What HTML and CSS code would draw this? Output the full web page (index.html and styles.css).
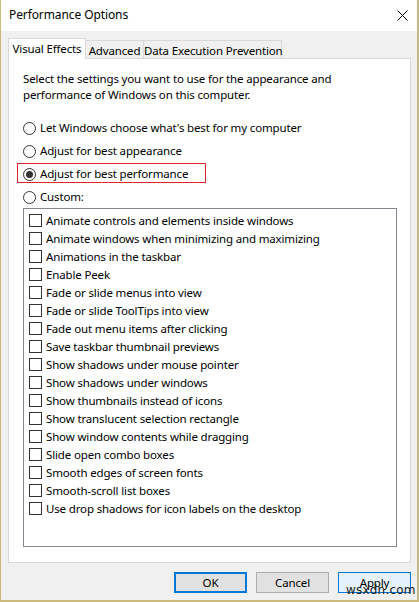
FILE: index.html
```html
<!DOCTYPE html>
<html lang="en">
<head>
<meta charset="utf-8">
<title>Performance Options</title>
<link rel="stylesheet" href="styles.css">
</head>
<body>
<div class="window">
  <div class="titlebar">
    <span class="title">Performance Options</span>
    <svg class="close" width="11" height="11" viewBox="0 0 11 11"><path d="M0.5 0.5 L10.5 10.5 M10.5 0.5 L0.5 10.5" stroke="#000" stroke-width="1"/></svg>
  </div>
  <div class="content">
    <div class="tabs">
      <div class="tab tab-active tab-ve">Visual Effects</div>
      <div class="tab tab-adv">Advanced</div>
      <div class="tab tab-dep">Data Execution Prevention</div>
    </div>
    <div class="panel">
      <p class="desc">Select the settings you want to use for the appearance and performance of Windows on this computer.</p>
      <div class="radios">
        <div class="radio-row"><span class="radio"></span><span>Let Windows choose what's best for my computer</span></div>
        <div class="radio-row"><span class="radio"></span><span>Adjust for best appearance</span></div>
        <div class="radio-row highlighted"><span class="radio checked"></span><span>Adjust for best performance</span><span class="redbox"></span></div>
        <div class="radio-row"><span class="radio"></span><span>Custom:</span></div>
      </div>
      <div class="listbox">
        <div class="check-row"><span class="check"></span><span>Animate controls and elements inside windows</span></div>
        <div class="check-row"><span class="check"></span><span>Animate windows when minimizing and maximizing</span></div>
        <div class="check-row"><span class="check"></span><span>Animations in the taskbar</span></div>
        <div class="check-row"><span class="check"></span><span>Enable Peek</span></div>
        <div class="check-row"><span class="check"></span><span>Fade or slide menus into view</span></div>
        <div class="check-row"><span class="check"></span><span>Fade or slide ToolTips into view</span></div>
        <div class="check-row"><span class="check"></span><span>Fade out menu items after clicking</span></div>
        <div class="check-row"><span class="check"></span><span>Save taskbar thumbnail previews</span></div>
        <div class="check-row"><span class="check"></span><span>Show shadows under mouse pointer</span></div>
        <div class="check-row"><span class="check"></span><span>Show shadows under windows</span></div>
        <div class="check-row"><span class="check"></span><span>Show thumbnails instead of icons</span></div>
        <div class="check-row"><span class="check"></span><span>Show translucent selection rectangle</span></div>
        <div class="check-row"><span class="check"></span><span>Show window contents while dragging</span></div>
        <div class="check-row"><span class="check"></span><span>Slide open combo boxes</span></div>
        <div class="check-row"><span class="check"></span><span>Smooth edges of screen fonts</span></div>
        <div class="check-row"><span class="check"></span><span>Smooth-scroll list boxes</span></div>
        <div class="check-row"><span class="check"></span><span>Use drop shadows for icon labels on the desktop</span></div>
      </div>
    </div>
    <div class="buttons">
      <button class="btn btn-default">OK</button>
      <button class="btn">Cancel</button>
      <button class="btn btn-hover">Apply</button>
    </div>
  </div>
  <span class="watermark">wsxdn.com</span>
</div>
</body>
</html>
```

FILE: styles.css
```css
* { box-sizing: border-box; }
html, body { margin: 0; padding: 0; }
body {
  font-family: "Noto Sans", "Liberation Sans", sans-serif;
  font-size: 11.5px;
  letter-spacing: -0.15px;
  color: #000;
  background: #f0f0f0;
}
.window {
  position: relative;
  width: 419px;
  height: 602px;
  background: #f0f0f0;
  border-left: 1px solid #cbb97c;
  border-right: 2px solid #cbb97c;
  border-bottom: 2px solid #cbb97c;
  display: flex;
  flex-direction: column;
}
.titlebar {
  height: 31px;
  background: #fff;
  display: flex;
  align-items: center;
  justify-content: space-between;
  padding: 0 9px 1px 8px;
}
.title { font-size: 12px; line-height: 16px; letter-spacing: -0.1px; }
.close { display: block; }
.content {
  flex: 1;
  display: flex;
  flex-direction: column;
  padding: 7px 6px 0 7px;
}
.tabs {
  display: flex;
  align-items: flex-end;
  height: 21px;
  position: relative;
  z-index: 1;
  margin-bottom: -1px;
}
.tab {
  height: 18px;
  line-height: 19px;
  text-align: center;
  border: 1px solid #d9d9d9;
  border-bottom: none;
  background: #f0f0f0;
  white-space: nowrap;
  margin-bottom: 1px;
}
.tab + .tab { border-left: none; }
.tab-active {
  height: 21px;
  line-height: 19px;
  background: #fff;
  margin-bottom: 0;
}
.tab-ve { width: 78px; }
.tab-adv { width: 58px; }
.tab-dep { width: 138px; }
.panel {
  height: 505px;
  background: #fff;
  border: 1px solid #d9d9d9;
  padding: 12px 14px 0 14px;
  display: flex;
  flex-direction: column;
}
.desc {
  margin: 0;
  line-height: 16px;
  width: 340px;
}
.radios {
  margin-top: 18px;
  display: flex;
  flex-direction: column;
  gap: 9px;
}
.radio-row {
  position: relative;
  height: 14px;
  line-height: 14px;
  display: flex;
  align-items: center;
  gap: 4px;
  white-space: nowrap;
}
.radio {
  width: 13px;
  height: 13px;
  border: 1px solid #333;
  border-radius: 50%;
  background: #fff;
  display: flex;
  align-items: center;
  justify-content: center;
  flex: none;
}
.radio.checked::after {
  content: "";
  width: 7px;
  height: 7px;
  border-radius: 50%;
  background: #333;
}
.redbox {
  position: absolute;
  left: -6px;
  top: -4px;
  width: 189px;
  height: 20px;
  border: 1px solid #e0242c;
  pointer-events: none;
}
.listbox {
  margin-top: 4px;
  width: 374px;
  height: 339px;
  border: 1px solid #828790;
  background: #fff;
  padding: 2px 0 0 5px;
}
.check-row {
  height: 18px;
  display: flex;
  align-items: center;
  gap: 4px;
  white-space: nowrap;
}
.check {
  width: 13px;
  height: 13px;
  border: 1px solid #333;
  background: #fff;
  flex: none;
}
.buttons {
  display: flex;
  justify-content: flex-end;
  gap: 9px;
  padding-top: 9px;
}
.btn {
  width: 73px;
  height: 21px;
  padding: 0;
  font-family: inherit;
  font-size: 11.5px;
  letter-spacing: -0.15px;
  color: #000;
  background: #e1e1e1;
  border: 1px solid #adadad;
  line-height: 18px;
}
.btn-default {
  border: 2px solid #0078d7;
}
.btn-hover {
  background: #e5f1fb;
  border: 1px solid #0078d7;
}
.watermark {
  position: absolute;
  left: 345px;
  top: 584px;
  font-family: "DejaVu Sans", sans-serif;
  font-size: 12px;
  line-height: 13px;
  letter-spacing: 0.2px;
  color: #222;
}
```
